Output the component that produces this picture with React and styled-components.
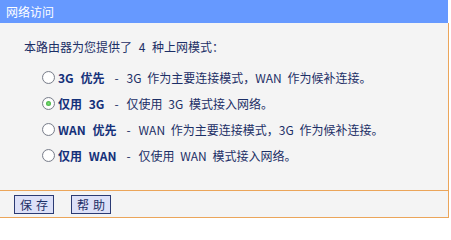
import styled, { createGlobalStyle } from "styled-components";

const GlobalStyle = createGlobalStyle`
  html, body {
    margin: 0;
    padding: 0;
    background: #ffffff;
  }
  body {
    font-family: "Noto Sans CJK SC", "Liberation Sans", sans-serif;
    font-size: 12px;
  }
`;

const modos = [
  { id: "3g1st", label: "3G 优先", desc: "3G 作为主要连接模式，WAN 作为候补连接。" },
  { id: "3gonly", label: "仅用 3G", desc: "仅使用 3G 模式接入网络。", checked: true },
  { id: "wan1st", label: "WAN 优先", desc: "WAN 作为主要连接模式，3G 作为候补连接。" },
  { id: "wanonly", label: "仅用 WAN", desc: "仅使用 WAN 模式接入网络。" },
];

const App = () => {
  return (
    <Page>
      <GlobalStyle />
      <Titulo>网络访问</Titulo>
      <Panel>
        <Intro>本路由器为您提供了 4 种上网模式：</Intro>
        <Lista>
          {modos.map((m) => (
            <Fila key={m.id}>
              <Radio type="radio" name="modo" defaultChecked={m.checked} />
              <Etiqueta>{m.label}</Etiqueta>
              <Guion>-</Guion>
              <Descripcion>{m.desc}</Descripcion>
            </Fila>
          ))}
        </Lista>
      </Panel>
      <Botonera>
        <Boton>保存</Boton>
        <Boton>帮助</Boton>
      </Botonera>
    </Page>
  );
};

const Page = styled.div`
  width: 449px;
  display: flex;
  flex-direction: column;
`;

const Titulo = styled.div`
  width: 448px;
  height: 23px;
  line-height: 23px;
  padding-left: 6px;
  box-sizing: border-box;
  background-color: #6699ff;
  color: #ffffff;
  font-size: 12px;
`;

const Panel = styled.div`
  background-color: #f4f4f4;
  border-right: 1px solid #eba55a;
  height: 167px;
  box-sizing: border-box;
  padding: 15px 0 0 24px;
  color: #1c2f66;
`;

const Intro = styled.div`
  height: 18px;
  line-height: 18px;
  white-space: pre;
  word-spacing: 4px;
`;

const Lista = styled.div`
  display: flex;
  flex-direction: column;
  gap: 8px;
  margin-top: 12px;
  padding-left: 18px;
`;

const Fila = styled.label`
  display: flex;
  align-items: center;
  height: 18px;
  white-space: pre;
`;

const Radio = styled.input`
  appearance: none;
  width: 13px;
  height: 13px;
  margin: 0 3px 0 0;
  border-radius: 50%;
  border: 1px solid #7a7f8c;
  background: radial-gradient(circle, #ffffff 55%, #e4e4e4 100%);
  box-sizing: border-box;
  display: grid;
  place-items: center;

  &:checked::after {
    content: "";
    width: 5px;
    height: 5px;
    border-radius: 50%;
    background: radial-gradient(circle, #7ee07a 0%, #2e9e2a 100%);
  }
`;

const Etiqueta = styled.span`
  font-weight: bold;
  color: #14317a;
  word-spacing: 4px;
`;

const Guion = styled.span`
  margin: 0 8px 0 10px;
`;

const Descripcion = styled.span`
  word-spacing: 3px;
`;

const Botonera = styled.div`
  display: flex;
  align-items: center;
  gap: 17px;
  height: 26px;
  padding-left: 14px;
  border-top: 1px solid #eba55a;
  border-bottom: 1px solid #eba55a;
  border-right: 1px solid #eba55a;
  background-color: #f4f4f4;
`;

const Boton = styled.button`
  width: 40px;
  height: 19px;
  padding: 0;
  border: 1px solid #2b3a73;
  background-color: #dce0f8;
  color: #1c2f66;
  font-family: "Noto Sans CJK SC", sans-serif;
  font-size: 12px;
  letter-spacing: 4px;
  text-indent: 4px;
  line-height: 17px;
`;

export default App;
